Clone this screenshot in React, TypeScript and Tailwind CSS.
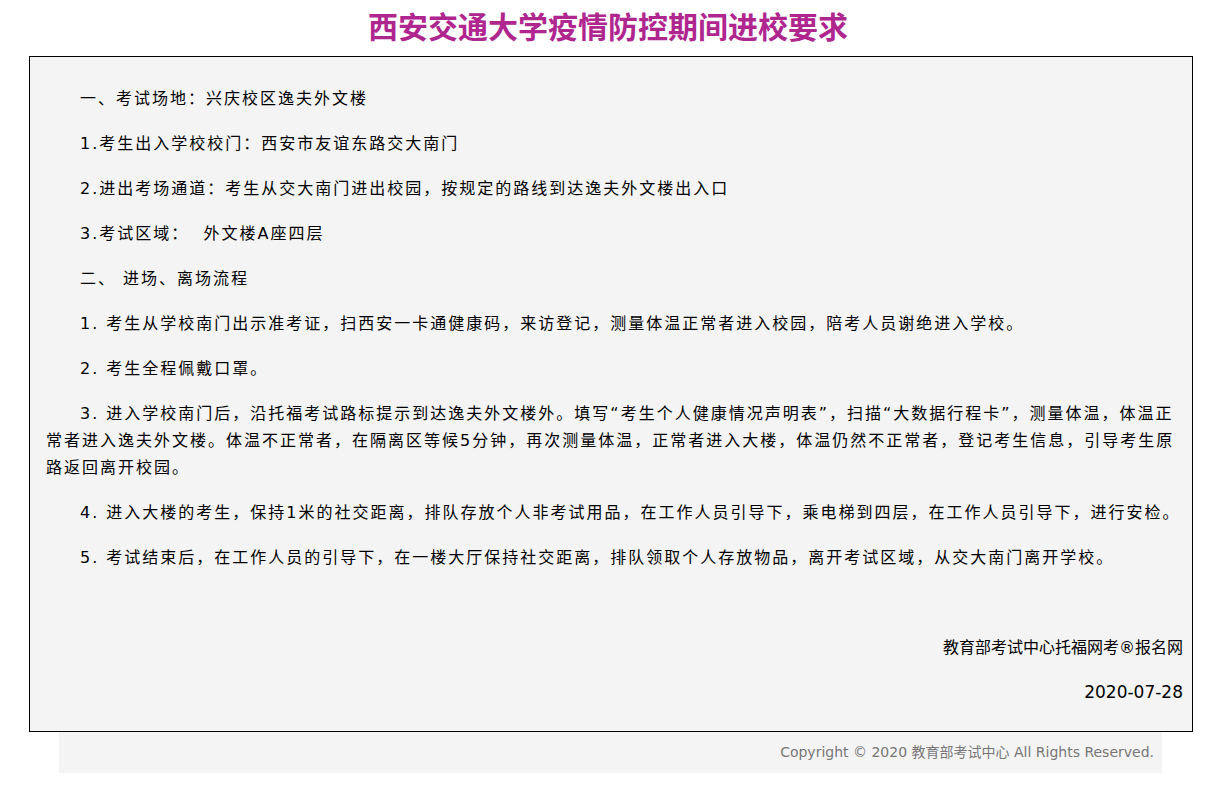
export default function App() {
  const f = { fontFamily: '"DejaVu Sans", "Noto Sans CJK SC", sans-serif' };
  const paras = [
    "一、考试场地：兴庆校区逸夫外文楼",
    "1.考生出入学校校门：西安市友谊东路交大南门",
    "2.进出考场通道：考生从交大南门进出校园，按规定的路线到达逸夫外文楼出入口",
    "3.考试区域：  外文楼A座四层",
    "二、 进场、离场流程",
    "1. 考生从学校南门出示准考证，扫西安一卡通健康码，来访登记，测量体温正常者进入校园，陪考人员谢绝进入学校。",
    "2. 考生全程佩戴口罩。",
    "3. 进入学校南门后，沿托福考试路标提示到达逸夫外文楼外。填写“考生个人健康情况声明表”，扫描“大数据行程卡”，测量体温，体温正常者进入逸夫外文楼。体温不正常者，在隔离区等候5分钟，再次测量体温，正常者进入大楼，体温仍然不正常者，登记考生信息，引导考生原路返回离开校园。",
    "4. 进入大楼的考生，保持1米的社交距离，排队存放个人非考试用品，在工作人员引导下，乘电梯到四层，在工作人员引导下，进行安检。",
    "5. 考试结束后，在工作人员的引导下，在一楼大厅保持社交距离，排队领取个人存放物品，离开考试区域，从交大南门离开学校。",
  ];
  return (
    <div className="w-[1216px] h-[792px] bg-white" style={f}>
      <h1 className="text-center text-[30px] font-bold text-[#b0268f] leading-[36px] pt-[10px] h-[56px]">
        西安交通大学疫情防控期间进校要求
      </h1>
      <div className="ml-[29px] w-[1164px] border border-black bg-[#f4f4f4] pl-[16px] pr-[9px] pt-[10px] pb-[7px] text-[16px] text-black leading-[27px] tracking-[2px]">
        {paras.map((p, i) => (
          <p key={i} className="indent-[34px] my-[18px] whitespace-pre-wrap">{p}</p>
        ))}
        <p className="my-[18px] h-[27px]"></p>
        <p className="my-[18px] text-right tracking-normal">教育部考试中心托福网考®报名网</p>
        <p className="my-[18px] text-right tracking-normal text-[17px]">2020-07-28</p>
      </div>
      <div className="ml-[59px] w-[1103px] h-[41px] bg-[#f4f4f4] flex items-center justify-end pr-[8px] text-[14px] text-[#777]">
        Copyright © 2020 教育部考试中心 All Rights Reserved.
      </div>
    </div>
  );
}
